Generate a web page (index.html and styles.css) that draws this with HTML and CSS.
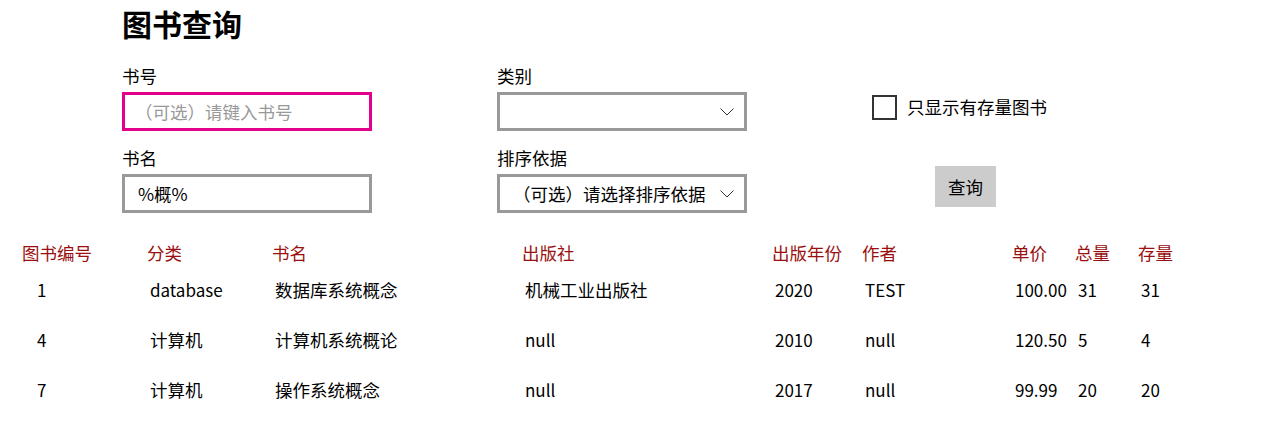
FILE: index.html
```html
<!DOCTYPE html>
<html lang="zh-CN">
<head>
<meta charset="utf-8">
<link rel="stylesheet" href="styles.css">
</head>
<body>
<div class="page">
  <h1 class="title">图书查询</h1>
  <div class="form">
    <div class="field">
      <label class="label">书号</label>
      <div class="box box-focus"><span class="placeholder">（可选）请键入书号</span></div>
    </div>
    <div class="field">
      <label class="label">类别</label>
      <div class="box box-select"><span class="value"></span>
        <svg class="chev" width="14" height="8" viewBox="0 0 14 8"><path d="M0.5 0.5 L7 7 L13.5 0.5" fill="none" stroke="#333" stroke-width="1"/></svg>
      </div>
    </div>
    <div class="side side-top">
      <span class="checkbox"></span>
      <span class="check-label">只显示有存量图书</span>
    </div>
    <div class="field">
      <label class="label">书名</label>
      <div class="box"><span class="value">%概%</span></div>
    </div>
    <div class="field">
      <label class="label">排序依据</label>
      <div class="box box-select"><span class="value value-select">（可选）请选择排序依据</span>
        <svg class="chev" width="14" height="8" viewBox="0 0 14 8"><path d="M0.5 0.5 L7 7 L13.5 0.5" fill="none" stroke="#333" stroke-width="1"/></svg>
      </div>
    </div>
    <div class="side side-bottom">
      <button class="btn">查询</button>
    </div>
  </div>
  <div class="table">
    <div class="row head">
      <span>图书编号</span><span>分类</span><span>书名</span><span>出版社</span><span>出版年份</span><span>作者</span><span>单价</span><span>总量</span><span>存量</span>
    </div>
    <div class="row data">
      <span class="id n">1</span><span class="n">database</span><span>数据库系统概念</span><span>机械工业出版社</span><span class="n">2020</span><span class="n">TEST</span><span class="n">100.00</span><span class="n">31</span><span class="n">31</span>
    </div>
    <div class="row data">
      <span class="id n">4</span><span>计算机</span><span>计算机系统概论</span><span class="n">null</span><span class="n">2010</span><span class="n">null</span><span class="n">120.50</span><span class="n">5</span><span class="n">4</span>
    </div>
    <div class="row data">
      <span class="id n">7</span><span>计算机</span><span>操作系统概念</span><span class="n">null</span><span class="n">2017</span><span class="n">null</span><span class="n">99.99</span><span class="n">20</span><span class="n">20</span>
    </div>
  </div>
</div>
</body>
</html>
```

FILE: styles.css
```css
* { box-sizing: border-box; }
html, body { margin: 0; padding: 0; background: #fff; }
body {
  font-family: "Noto Sans CJK SC", "Noto Sans", sans-serif;
  font-size: 17.5px;
  color: #000;
}
.page { width: 1266px; height: 422px; overflow: hidden; }
.title {
  margin: 0;
  padding: 3px 0 0 122px;
  font-size: 30px;
  line-height: 40px;
  font-weight: 700;
}
.form {
  display: grid;
  grid-template-columns: 250px 250px 250px;
  column-gap: 125px;
  row-gap: 16px;
  padding: 22px 0 0 122px;
}
.field { display: flex; flex-direction: column; }
.label {
  font-size: 17.5px;
  line-height: 24px;
  height: 24px;
  margin-bottom: 3px;
  margin-top: -1px;
}
.label + .box { margin-top: 1px; }
.box {
  height: 39px;
  border: 3px solid #999;
  display: flex;
  align-items: center;
  padding-left: 13px;
  font-size: 17.5px;
}
.box-focus { border-color: #e3008c; padding-left: 10px; }
.placeholder { color: #999; }
.box-select { padding-left: 13px; padding-right: 10px; justify-content: space-between; }
.value-select { color: #000; }
.chev { flex: none; }
.side { display: flex; }
.side-top { padding-top: 30px; align-items: flex-start; }
.checkbox {
  width: 25px; height: 25px;
  border: 2px solid #333;
  background: #fff;
  flex: none;
}
.check-label { margin-left: 10px; line-height: 24px; }
.side-bottom { padding-left: 63px; align-items: flex-start; padding-top: 19px; }
.btn {
  width: 61px; height: 41px;
  background: #ccc;
  border: none;
  padding: 0;
  font-family: inherit;
  font-size: 17.5px;
  color: #000;
}
.table { padding: 28px 0 0 22px; }
.row {
  display: grid;
  grid-template-columns: 125px 125px 250px 250px 90px 150px 63px 63px 100px;
  line-height: 24px;
}
.head { color: #9a0f0f; height: 24px; }
.data { height: 50px; align-items: center; }
.data span { padding-left: 3px; }
.data span.n { font-size: 17px; }
.data span.id { padding-left: 15px; }
```
